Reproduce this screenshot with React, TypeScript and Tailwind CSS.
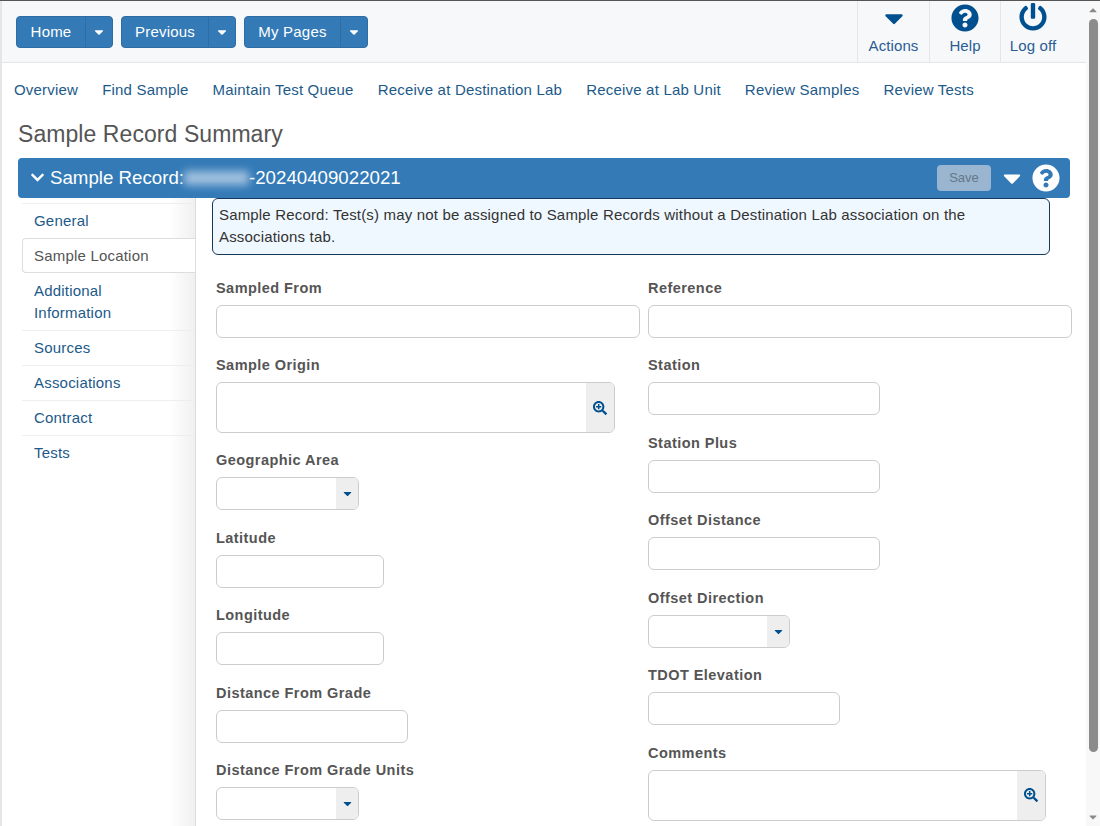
import React from 'react';
import { FaCaretDown, FaCaretUp, FaChevronDown, FaPowerOff, FaQuestionCircle, FaSearchPlus } from 'react-icons/fa';

const navLinks = ['Overview', 'Find Sample', 'Maintain Test Queue', 'Receive at Destination Lab', 'Receive at Lab Unit', 'Review Samples', 'Review Tests'];

const SplitButton: React.FC<{ label: string; width: string }> = ({ label, width }) => (
  <div className="flex h-8 rounded bg-[#337ab7] border border-[#2e6da4] text-white text-[15px] tracking-[0.2px]">
    <div className={`${width} flex items-center justify-center`}>{label}</div>
    <div className="w-[27px] flex items-center justify-center border-l border-[#2e6da4]">
      <FaCaretDown className="w-[14px] h-[14px]" />
    </div>
  </div>
);

const Label: React.FC<{ text: string }> = ({ text }) => (
  <div className="h-[17px] mb-2 leading-[17px] text-[14.5px] font-bold text-[#555] tracking-[0.45px]">{text}</div>
);

const TextField: React.FC<{ label: string; width: string; first?: boolean }> = ({ label, width, first }) => (
  <div className={first ? 'mb-[19px]' : 'mb-[19.5px]'}>
    <Label text={label} />
    <div className={`${width} ${first ? 'h-[33px] mt-[2px]' : 'h-[33px]'} rounded-md border border-[#ccc] bg-white`}></div>
  </div>
);

const SelectField: React.FC<{ label: string; width: string }> = ({ label, width }) => (
  <div className="mb-[19.5px]">
    <Label text={label} />
    <div className={`${width} h-[33px] flex justify-end rounded-md border border-[#ccc] bg-white overflow-hidden`}>
      <div className="w-[22px] bg-[#eee] flex items-center justify-center text-[#00508f]">
        <FaCaretDown className="w-[13px] h-[13px]" />
      </div>
    </div>
  </div>
);

const LookupField: React.FC<{ label: string; width: string }> = ({ label, width }) => (
  <div className="mb-[19px]">
    <Label text={label} />
    <div className={`${width} h-[51px] flex justify-end rounded-md border border-[#ccc] bg-white overflow-hidden`}>
      <div className="w-[28px] bg-[#eee] flex items-center justify-center text-[#00508f]">
        <FaSearchPlus className="w-[14px] h-[14px]" />
      </div>
    </div>
  </div>
);

const SideTab: React.FC<{ label: React.ReactNode; active?: boolean; tall?: boolean }> = ({ label, active, tall }) =>
  active ? (
    <div className="h-[35px] pl-[11px] pt-[1px] flex items-center rounded-l border border-r-0 border-[#ddd] bg-white text-[#555] relative z-10">
      {label}
    </div>
  ) : (
    <div className={`${tall ? 'h-[58px]' : 'h-[35px]'} pl-3 flex items-center border-b last:border-b-transparent border-[#eee] text-[#1c5a8a] leading-[22px]`}>
      <div>{label}</div>
    </div>
  );

export default function App() {
  return (
    <div className="w-[1100px] h-[826px] overflow-hidden flex bg-white border-t border-[#555] font-['Liberation_Sans',Arial,sans-serif] text-[15px]">
      <div className="w-[1086px] h-[825px] border-l-2 border-[#e6e6e6] overflow-hidden shrink-0">
        {/* Top toolbar */}
        <div className="h-[62px] flex justify-between bg-[#f6f8fa] border-b border-[#e4e7ea]">
          <div className="flex gap-2 pl-[14px] pt-[15px]">
            <SplitButton label="Home" width="w-[68px]" />
            <SplitButton label="Previous" width="w-[86px]" />
            <SplitButton label="My Pages" width="w-[95px]" />
          </div>
          <div className="flex text-[#2a5d94] text-[15px] tracking-[0.1px]">
            <div className="w-[72px] border-l border-[#e4e7ea] flex flex-col items-center">
              <div className="h-[35px] flex items-center text-[#00508f]">
                <FaCaretDown className="w-[30px] h-[30px] -mt-[2px]" />
              </div>
              <div className="leading-[20px]">Actions</div>
            </div>
            <div className="w-[71px] border-l border-[#e4e7ea] flex flex-col items-center">
              <div className="h-[35px] flex items-center text-[#00508f]">
                <FaQuestionCircle className="w-[28px] h-[28px] -mt-[1px]" />
              </div>
              <div className="leading-[20px]">Help</div>
            </div>
            <div className="w-[86px] border-l border-[#e4e7ea] flex flex-col items-center pr-[21px]">
              <div className="h-[35px] flex items-center text-[#00508f]">
                <FaPowerOff className="w-[28px] h-[28px] -mt-[3px]" />
              </div>
              <div className="leading-[20px]">Log off</div>
            </div>
          </div>
        </div>

        {/* Page links */}
        <div className="flex gap-6 pl-3 pt-[2px] h-[52px] items-center text-[#1c5a8a] text-[15px] tracking-[0.2px]">
          {navLinks.map((link) => (
            <div key={link}>{link}</div>
          ))}
        </div>

        <div className="pl-4 h-[43px] text-[23px] leading-[38px] text-[#555] tracking-[0.07px]">Sample Record Summary</div>

        {/* Record bar */}
        <div className="ml-4 w-[1052px] h-10 rounded bg-[#337ab7] flex items-center justify-between pl-3 pr-[10px] text-white">
          <div className="flex items-center text-[18.7px]">
            <FaChevronDown className="w-[15px] h-[15px] mr-[5px]" />
            <span>Sample Record:</span>
            <span className="inline-block w-[65px] h-[14px] bg-[#a3c1df] blur-[4px]"></span>
            <span>-20240409022021</span>
          </div>
          <div className="flex items-center">
            <div className="w-[54px] h-[26px] rounded bg-[#99b5cf] text-[#66788a] text-[13px] flex items-center justify-center mr-[7px]">Save</div>
            <FaCaretDown className="w-[28px] h-[28px] mr-[6px]" />
            <FaQuestionCircle className="w-[28px] h-[28px]" />
          </div>
        </div>

        <div className="flex">
          {/* Side tabs */}
          <div className="ml-5 w-[173px] h-[630px] pt-[5px] text-[15px] tracking-[0.2px] shrink-0 bg-gradient-to-r from-white from-[85%] to-[#f0f0f0]">
            <div className="border-t border-[#eee] h-[35px] pl-3 flex items-center text-[#1c5a8a]">General</div>
            <SideTab label="Sample Location" active />
            <SideTab label={<>Additional<br />Information</>} tall />
            <SideTab label="Sources" />
            <SideTab label="Associations" />
            <SideTab label="Contract" />
            <SideTab label="Tests" />
          </div>

          <div className="flex-1 border-l border-[#ddd] min-w-0">
            <div className="ml-4 w-[838px] h-[57px] rounded-md border border-[#17375e] bg-[#f0f8ff] px-[6px] pt-[5px] text-[15px] leading-[22px] text-[#333] tracking-[0.17px]">
              Sample Record: Test(s) may not be assigned to Sample Records without a Destination Lab association on the Associations tab.
            </div>

            <div className="flex pl-5 pt-[25px]">
              <div className="w-[432px] shrink-0">
                <TextField label="Sampled From" width="w-[424px]" first />
                <LookupField label="Sample Origin" width="w-[399px]" />
                <SelectField label="Geographic Area" width="w-[143px]" />
                <TextField label="Latitude" width="w-[168px]" />
                <TextField label="Longitude" width="w-[168px]" />
                <TextField label="Distance From Grade" width="w-[192px]" />
                <SelectField label="Distance From Grade Units" width="w-[143px]" />
              </div>
              <div className="flex-1">
                <TextField label="Reference" width="w-[424px]" first />
                <TextField label="Station" width="w-[232px]" />
                <TextField label="Station Plus" width="w-[232px]" />
                <TextField label="Offset Distance" width="w-[232px]" />
                <SelectField label="Offset Direction" width="w-[142px]" />
                <TextField label="TDOT Elevation" width="w-[192px]" />
                <LookupField label="Comments" width="w-[398px]" />
              </div>
            </div>
          </div>
        </div>
      </div>

      {/* Scrollbar */}
      <div className="w-[14px] h-[825px] flex flex-col items-center bg-[#f8f8f8] text-[#8a8a8a]">
        <FaCaretUp className="w-3 h-3 mt-[3px]" />
        <div className="w-[9px] h-[733px] mt-[3px] rounded-full bg-[#8b8b8b]"></div>
        <div className="flex-1"></div>
        <FaCaretDown className="w-3 h-3 mb-[3px]" />
      </div>
    </div>
  );
}
